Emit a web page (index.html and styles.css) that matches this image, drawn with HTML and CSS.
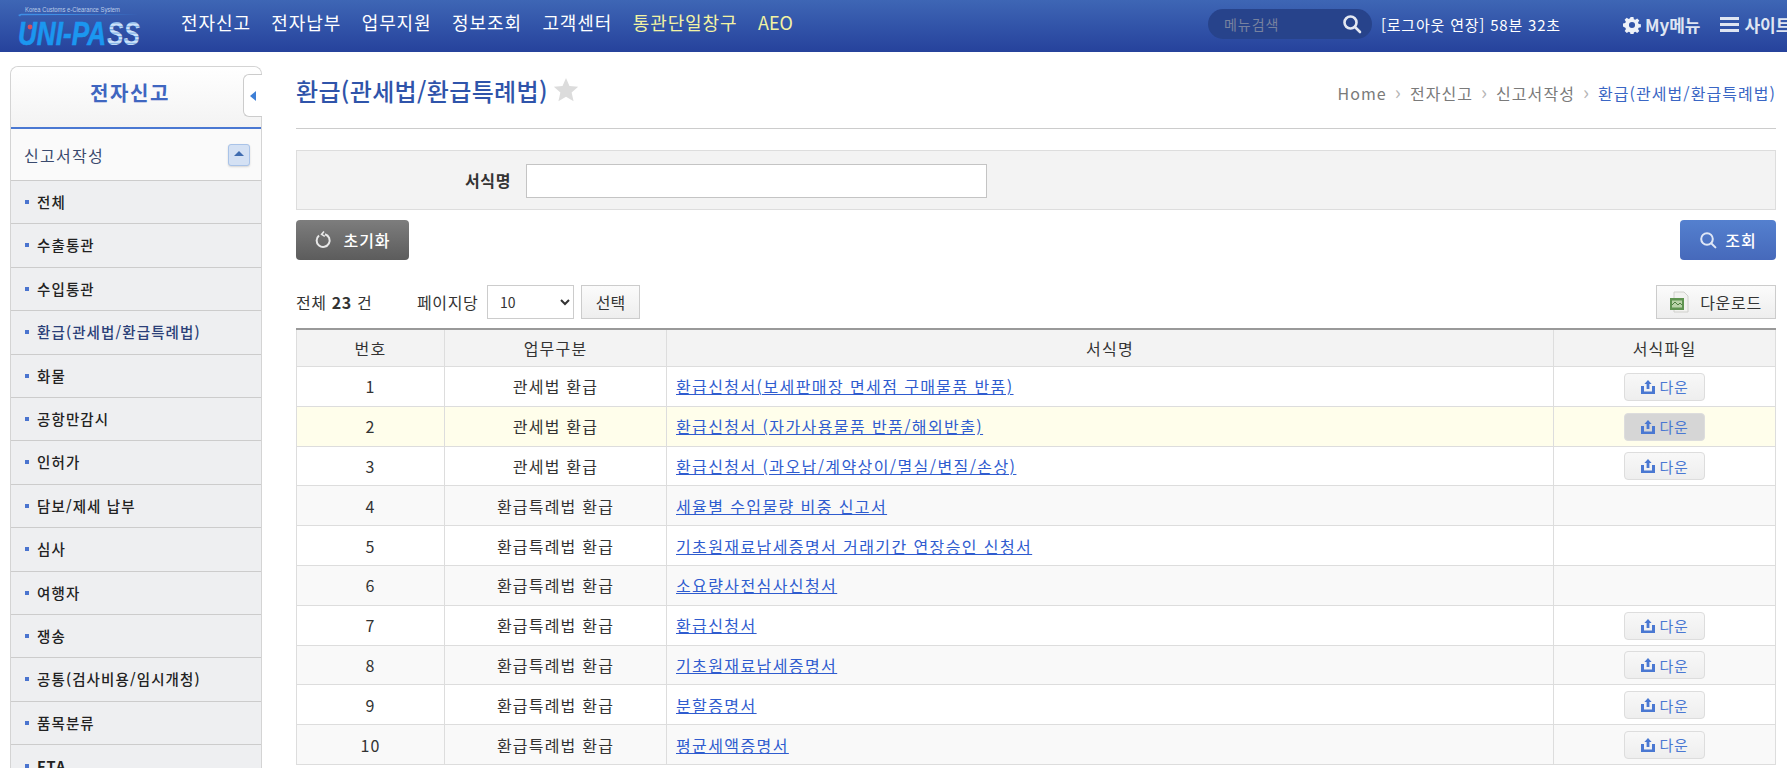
FILE: index.html
```html
<!DOCTYPE html>
<html lang="ko">
<head>
    <meta charset="UTF-8">
    <meta name="viewport" content="width=device-width, initial-scale=1.0">
    <title>환급(관세법/환급특례법) - UNI-PASS</title>
    <link rel="stylesheet" href="styles.css">
</head>
<body>
    <header class="top-bar">
        <a class="logo" href="#">
            <svg width="124" height="48" viewBox="0 0 124 48">
                <defs>
                    <pattern id="logoStripe" width="4" height="3.4" patternUnits="userSpaceOnUse">
                        <rect width="4" height="3.4" fill="#cfe4fa"></rect>
                        <rect width="4" height="1.1" fill="#6fa4e0"></rect>
                    </pattern>
                </defs>
                <text class="logo-small" x="8" y="10" textLength="95" lengthAdjust="spacingAndGlyphs">Korea Customs e-Clearance System</text>
                <path d="M1 13 L4 11.8 L122 12.4 L4 13.2 L3 14.6 Z" fill="#3f8fe6"></path>
                <text class="logo-big" x="1" y="43" textLength="88" lengthAdjust="spacingAndGlyphs" fill="#1b97f0" stroke="#1b97f0">UNI-PA</text>
                <text class="logo-big" x="90" y="43" textLength="33" lengthAdjust="spacingAndGlyphs" fill="url(#logoStripe)">SS</text>
                <circle cx="13" cy="25" r="2.4" fill="#d8505a"></circle>
            </svg>
        </a>
        <nav class="gnb">
            <a href="#">전자신고</a>
            <a href="#">전자납부</a>
            <a href="#">업무지원</a>
            <a href="#">정보조회</a>
            <a href="#">고객센터</a>
            <a class="gnb-hl" href="#">통관단일창구</a>
            <a class="gnb-hl gnb-latin" href="#">AEO</a>
        </nav>
        <div class="menu-search">
            <span>메뉴검색</span>
            <svg width="20" height="20" viewBox="0 0 20 20" fill="none" stroke="#e4e8f2" stroke-width="2.6">
                <circle cx="8.5" cy="8.5" r="6"></circle>
                <path d="M13 13 L18 18" stroke-linecap="round"></path>
            </svg>
        </div>
        <div class="session">[로그아웃 연장] 58분 32초</div>
        <a class="top-link my-menu" href="#">
            <svg width="18" height="18" viewBox="-1 -1 20 20">
                <path fill="#eef1f8" fill-rule="evenodd" d="M7.4 0h3.2l.5 2.5 1.5.7 2.2-1.4 2.3 2.3-1.4 2.2.7 1.5 2.5.5v3.2l-2.5.5-.7 1.5 1.4 2.2-2.3 2.3-2.2-1.4-1.5.7-.5 2.5H7.4l-.5-2.5-1.5-.7-2.2 1.4-2.3-2.3 1.4-2.2-.7-1.5L-1 10.6V7.4l2.5-.5.7-1.5-1.4-2.2 2.3-2.3 2.2 1.4 1.5-.7zM9 5.6a3.4 3.4 0 1 0 0 6.8 3.4 3.4 0 0 0 0-6.8z"></path>
            </svg>
            My메뉴
        </a>
        <a class="top-link site-map" href="#">
            <span class="burger"></span>
            사이트맵
        </a>
    </header>

    <div class="wrap">
        <aside class="side">
            <div class="side-title">
                <h2>전자신고</h2>
                <button class="side-toggle" type="button"><span></span></button>
            </div>
            <div class="side-group">
                <span>신고서작성</span>
                <button class="group-toggle" type="button"><span></span></button>
            </div>
            <ul class="side-list">
                <li><a href="#">전체</a></li>
                <li><a href="#">수출통관</a></li>
                <li><a href="#">수입통관</a></li>
                <li class="on"><a href="#">환급(관세법/환급특례법)</a></li>
                <li><a href="#">화물</a></li>
                <li><a href="#">공항만감시</a></li>
                <li><a href="#">인허가</a></li>
                <li><a href="#">담보/제세 납부</a></li>
                <li><a href="#">심사</a></li>
                <li><a href="#">여행자</a></li>
                <li><a href="#">쟁송</a></li>
                <li><a href="#">공통(검사비용/임시개청)</a></li>
                <li><a href="#">품목분류</a></li>
                <li><a class="fta" href="#">FTA</a></li>
            </ul>
        </aside>

        <main class="content">
            <div class="page-head">
                <div class="page-title">
                    <h1>환급(관세법/환급특례법)</h1>
                    <svg width="26" height="26" viewBox="0 0 24 24"><path fill="#dcdcdc" d="M12 1l3.2 7.4 8 .7-6 5.3 1.8 7.9L12 18.2l-7 4.1 1.8-7.9-6-5.3 8-.7z"></path></svg>
                </div>
                <ol class="crumbs">
                    <li>Home</li>
                    <li>전자신고</li>
                    <li>신고서작성</li>
                    <li class="crumb-now">환급(관세법/환급특례법)</li>
                </ol>
            </div>

            <div class="search-box">
                <label for="formName">서식명</label>
                <input id="formName" type="text">
            </div>

            <div class="btn-row">
                <button class="btn btn-reset" type="button">
                    <svg width="18" height="18" viewBox="0 0 18 18" fill="none" stroke="#e8e8e8" stroke-width="2">
                        <path d="M5 4.4 A6.5 6.5 0 1 0 11 3.2"></path>
                        <path d="M10 0.6 L7.6 3.4 L10.8 5.4" stroke-width="1.6"></path>
                    </svg>
                    초기화
                </button>
                <button class="btn btn-search" type="button">
                    <svg width="18" height="18" viewBox="0 0 18 18" fill="none" stroke="#dfe7f6" stroke-width="2">
                        <circle cx="8" cy="8" r="5.8"></circle>
                        <path d="M12.2 12.2 L16.4 16.4" stroke-linecap="round"></path>
                    </svg>
                    조회
                </button>
            </div>

            <div class="list-bar">
                <span class="total">전체 <b>23</b> 건</span>
                <label class="per-page" for="perPage">페이지당</label>
                <select class="per-select" id="perPage">
                    <option>10</option>
                    <option>20</option>
                    <option>50</option>
                </select>
                <button class="btn-plain" type="button">선택</button>
                <button class="btn-plain btn-excel" type="button">
                    <svg width="20" height="22" viewBox="0 0 20 22">
                        <path d="M4 1h10l4 4v16H4z" fill="#f2f2f0" stroke="#d0d0cc"></path>
                        <rect x="0" y="7" width="14" height="12" fill="#5f9450"></rect>
                        <rect x="2" y="9.5" width="10" height="7" fill="#b9d3a8"></rect>
                        <path d="M2 14 L5 11 L8 14 L10 12 L12 14" stroke="#4f7f40" fill="none"></path>
                    </svg>
                    다운로드
                </button>
            </div>

            <table class="grid">
                <colgroup>
                    <col class="col-no">
                    <col class="col-type">
                    <col class="col-name">
                    <col class="col-file">
                </colgroup>
                <thead>
                    <tr>
                        <th>번호</th>
                        <th>업무구분</th>
                        <th>서식명</th>
                        <th>서식파일</th>
                    </tr>
                </thead>
                <tbody>
                    <tr>
                        <td>1</td>
                        <td>관세법 환급</td>
                        <td class="left"><a href="#">환급신청서(보세판매장 면세점 구매물품 반품)</a></td>
                        <td><button class="btn-down" type="button"><svg class="up-icon" viewBox="0 0 14 14"><path d="M7 0l3.6 4H8.4v5H5.6V4H3.4zM0 6h3v5.6h8V6h3v8H0z"></path></svg>다운</button></td>
                    </tr>
                    <tr class="hover-row">
                        <td>2</td>
                        <td>관세법 환급</td>
                        <td class="left"><a href="#">환급신청서 (자가사용물품 반품/해외반출)</a></td>
                        <td><button class="btn-down" type="button"><svg class="up-icon" viewBox="0 0 14 14"><path d="M7 0l3.6 4H8.4v5H5.6V4H3.4zM0 6h3v5.6h8V6h3v8H0z"></path></svg>다운</button></td>
                    </tr>
                    <tr>
                        <td>3</td>
                        <td>관세법 환급</td>
                        <td class="left"><a href="#">환급신청서 (과오납/계약상이/멸실/변질/손상)</a></td>
                        <td><button class="btn-down" type="button"><svg class="up-icon" viewBox="0 0 14 14"><path d="M7 0l3.6 4H8.4v5H5.6V4H3.4zM0 6h3v5.6h8V6h3v8H0z"></path></svg>다운</button></td>
                    </tr>
                    <tr>
                        <td>4</td>
                        <td>환급특례법 환급</td>
                        <td class="left"><a href="#">세율별 수입물량 비중 신고서</a></td>
                        <td></td>
                    </tr>
                    <tr>
                        <td>5</td>
                        <td>환급특례법 환급</td>
                        <td class="left"><a href="#">기초원재료납세증명서 거래기간 연장승인 신청서</a></td>
                        <td></td>
                    </tr>
                    <tr>
                        <td>6</td>
                        <td>환급특례법 환급</td>
                        <td class="left"><a href="#">소요량사전심사신청서</a></td>
                        <td></td>
                    </tr>
                    <tr>
                        <td>7</td>
                        <td>환급특례법 환급</td>
                        <td class="left"><a href="#">환급신청서</a></td>
                        <td><button class="btn-down" type="button"><svg class="up-icon" viewBox="0 0 14 14"><path d="M7 0l3.6 4H8.4v5H5.6V4H3.4zM0 6h3v5.6h8V6h3v8H0z"></path></svg>다운</button></td>
                    </tr>
                    <tr>
                        <td>8</td>
                        <td>환급특례법 환급</td>
                        <td class="left"><a href="#">기초원재료납세증명서</a></td>
                        <td><button class="btn-down" type="button"><svg class="up-icon" viewBox="0 0 14 14"><path d="M7 0l3.6 4H8.4v5H5.6V4H3.4zM0 6h3v5.6h8V6h3v8H0z"></path></svg>다운</button></td>
                    </tr>
                    <tr>
                        <td>9</td>
                        <td>환급특례법 환급</td>
                        <td class="left"><a href="#">분할증명서</a></td>
                        <td><button class="btn-down" type="button"><svg class="up-icon" viewBox="0 0 14 14"><path d="M7 0l3.6 4H8.4v5H5.6V4H3.4zM0 6h3v5.6h8V6h3v8H0z"></path></svg>다운</button></td>
                    </tr>
                    <tr>
                        <td>10</td>
                        <td>환급특례법 환급</td>
                        <td class="left"><a href="#">평균세액증명서</a></td>
                        <td><button class="btn-down" type="button"><svg class="up-icon" viewBox="0 0 14 14"><path d="M7 0l3.6 4H8.4v5H5.6V4H3.4zM0 6h3v5.6h8V6h3v8H0z"></path></svg>다운</button></td>
                    </tr>
                </tbody>
            </table>
        </main>
    </div>
</body>
</html>
```

FILE: styles.css
```css
* {
    box-sizing: border-box;
}
html, body {
    height: 100%;
}
body {
    margin: 0;
    overflow: hidden;
    font-family: "Noto Sans CJK KR", "Noto Sans", sans-serif;
    font-size: 15px;
    color: #333;
    background: #fff;
}
a {
    text-decoration: none;
    color: inherit;
}
button {
    font-family: inherit;
    cursor: pointer;
}

/* top bar */
.top-bar {
    display: flex;
    align-items: center;
    height: 52px;
    padding-left: 17px;
    overflow: hidden;
    white-space: nowrap;
    color: #fff;
    background: linear-gradient(#3e66b5, #26429c);
}
.logo {
    display: block;
    width: 124px;
    height: 48px;
    flex: none;
}
.logo-small {
    font-family: "Liberation Sans", sans-serif;
    font-size: 6.5px;
    fill: #b9cbe8;
}
.logo-big {
    font-family: "Liberation Sans", sans-serif;
    font-size: 33px;
    font-weight: bold;
    font-style: italic;
    stroke-width: 0.6px;
}
.gnb {
    display: flex;
    gap: 20.5px;
    margin-left: 40px;
    margin-top: -8px;
    font-size: 18px;
    letter-spacing: 0.9px;
    flex: none;
}
.gnb-hl {
    color: #f3f3a2;
}
.gnb-latin {
    letter-spacing: 0;
}
.menu-search {
    display: flex;
    align-items: center;
    justify-content: space-between;
    width: 164px;
    height: 30px;
    margin-top: -4px;
    margin-left: 415px;
    padding: 0 10px 0 16px;
    border-radius: 15px;
    background: #27438b;
    color: #77829f;
    font-size: 14px;
    letter-spacing: 1px;
    flex: none;
}
.session {
    margin-left: 9px;
    margin-top: -3px;
    font-size: 15px;
    letter-spacing: 0.8px;
    flex: none;
}
.top-link {
    display: flex;
    align-items: center;
    gap: 4px;
    margin-top: -3px;
    font-size: 17px;
    font-weight: 700;
    color: #dfe5f2;
    flex: none;
}
.my-menu {
    margin-left: 62px;
}
.site-map {
    margin-left: 20px;
    gap: 5px;
}
.burger {
    display: block;
    width: 19px;
    height: 15px;
    border-top: 3px solid #dfe5f2;
    border-bottom: 3px solid #dfe5f2;
    position: relative;
}
.burger::after {
    content: "";
    position: absolute;
    left: 0;
    right: 0;
    top: 3px;
    height: 3px;
    background: #dfe5f2;
}

/* layout */
.wrap {
    display: flex;
    align-items: flex-start;
    padding-left: 10px;
}

/* left menu */
.side {
    width: 252px;
    margin-top: 14px;
    border: 1px solid #d4d4d4;
    border-bottom: 0;
    border-radius: 8px 8px 0 0;
    flex: none;
}
.side-title {
    position: relative;
    height: 62px;
    border-bottom: 2px solid #4a78d2;
    border-radius: 8px 8px 0 0;
    background: linear-gradient(#fff, #f3f3f3);
    text-align: center;
}
.side-title h2 {
    margin: 0;
    padding-right: 12px;
    font-size: 20px;
    font-weight: 700;
    line-height: 52px;
    letter-spacing: 1.6px;
    color: #3f66c0;
}
.side-toggle {
    position: absolute;
    top: 7px;
    right: -1px;
    width: 19px;
    height: 43px;
    padding: 0;
    border: 1px solid #ccc;
    border-right: 0;
    border-radius: 6px 0 0 6px;
    background: #fff;
}
.side-toggle span {
    display: block;
    width: 0;
    margin-left: 6px;
    border: 5px solid transparent;
    border-left: 0;
    border-right: 6px solid #3d7fd6;
}
.side-group {
    display: flex;
    align-items: center;
    justify-content: space-between;
    height: 52px;
    padding: 0 11px 0 13px;
    border-bottom: 1px solid #ccc;
    background: #fafafa;
    font-size: 16px;
    letter-spacing: 1.3px;
    color: #3a4a6e;
}
.group-toggle {
    width: 22px;
    height: 22px;
    padding: 0;
    border: 1px solid #a9c3e8;
    border-radius: 3px;
    background: #d4e1f4;
    box-shadow: 0 1px 2px rgba(0, 0, 0, 0.15);
}
.group-toggle span {
    display: block;
    width: 0;
    margin: 0 auto 2px;
    border: 5px solid transparent;
    border-top: 0;
    border-bottom: 5px solid #3f6cb0;
}
.side-list {
    margin: 0;
    padding: 0;
    list-style: none;
}
.side-list li {
    height: 43.4px;
    border-bottom: 1px solid #ccc;
    background: #eeeff1;
}
.side-list a {
    display: block;
    position: relative;
    padding-left: 26px;
    line-height: 41px;
    font-size: 14.5px;
    font-weight: 500;
    letter-spacing: 1.1px;
    color: #222;
}
.side-list a::before {
    content: "";
    position: absolute;
    left: 14px;
    top: 19px;
    width: 4px;
    height: 4px;
    background: #4a74cf;
}
.side-list .on a {
    color: #2b3f78;
}
.side-list .fta {
    font-weight: 700;
}

/* content */
.content {
    width: 1480px;
    margin-left: 34px;
    flex: none;
}
.page-head {
    display: flex;
    align-items: center;
    justify-content: space-between;
    height: 77px;
    border-bottom: 1px solid #ccc;
}
.page-title {
    display: flex;
    align-items: center;
    gap: 5px;
}
.page-title h1 {
    margin: 0;
    font-size: 24px;
    font-weight: 500;
    letter-spacing: 0.35px;
    color: #2f54aa;
}
.crumbs {
    display: flex;
    align-items: center;
    margin: 6px 0 0;
    padding: 0;
    list-style: none;
    font-size: 16px;
    font-weight: 400;
    letter-spacing: 1.05px;
    color: #7a7a7a;
}
.crumbs li + li::before {
    content: "\203A";
    margin: 0 8px;
    font-size: 20px;
    line-height: 1;
    color: #b5b5b5;
}
.crumbs .crumb-now {
    color: #3a66c4;
}
.search-box {
    display: flex;
    align-items: center;
    height: 60px;
    margin-top: 21px;
    border: 1px solid #ddd;
    background: #f3f3f3;
}
.search-box label {
    width: 214px;
    margin-right: 15px;
    text-align: right;
    font-size: 16px;
    font-weight: 700;
    letter-spacing: 0.6px;
}
.search-box input {
    width: 461px;
    height: 34px;
    margin-top: 1px;
    border: 1px solid #c4c4c4;
    background: #fff;
}
.btn-row {
    display: flex;
    justify-content: space-between;
    margin-top: 10px;
}
.btn {
    display: flex;
    align-items: center;
    justify-content: center;
    gap: 11px;
    height: 40px;
    border: 0;
    border-radius: 4px;
    color: #fff;
    font-size: 16px;
    font-weight: 500;
    letter-spacing: 1px;
}
.btn-reset {
    width: 113px;
    background: linear-gradient(#7d7d7d, #5c5c5c);
}
.btn-search {
    width: 96px;
    gap: 8px;
    background: linear-gradient(#5480cf, #4669bb);
}
.list-bar {
    display: flex;
    align-items: center;
    height: 34px;
    margin-top: 25px;
    font-size: 16px;
    letter-spacing: 0.6px;
}
.total {
    width: 121px;
}
.total b {
    font-weight: 700;
}
.per-page {
    width: 70px;
}
.per-select {
    width: 87px;
    height: 34px;
    padding-left: 8px;
    border: 1px solid #ccc;
    background: #fff;
    font-family: inherit;
    font-size: 14px;
    color: #333;
}
.btn-plain {
    width: 59px;
    height: 34px;
    margin-left: 7px;
    padding: 0;
    border: 1px solid #ccc;
    background: linear-gradient(#fbfbfb, #eee);
    font-size: 16px;
    color: #333;
}
.btn-excel {
    display: flex;
    align-items: center;
    justify-content: center;
    gap: 10px;
    width: 120px;
    margin-left: auto;
    letter-spacing: 0.7px;
}

/* table */
.grid {
    width: 1480px;
    margin-top: 9px;
    border-collapse: collapse;
    table-layout: fixed;
    border-top: 2px solid #999;
    font-size: 16px;
    letter-spacing: 1.2px;
}
.col-no {
    width: 148px;
}
.col-type {
    width: 222px;
}
.col-file {
    width: 222px;
}
.grid th, .grid td {
    border: 1px solid #ddd;
    padding: 0;
    text-align: center;
}
.grid th {
    height: 37.5px;
    font-weight: 400;
    background: #f3f3f3;
}
.grid td {
    height: 39.8px;
}
.grid tbody tr:nth-child(even) {
    background: #f9f9f9;
}
.grid tbody .hover-row:nth-child(even) {
    background: #fffeeb;
}
.grid .left {
    padding-left: 9px;
    text-align: left;
}
.grid a {
    color: #2f5ccf;
    text-decoration: underline;
    letter-spacing: 1.4px;
}
.btn-down {
    display: inline-flex;
    align-items: center;
    justify-content: center;
    gap: 5px;
    width: 81px;
    height: 28px;
    padding: 0;
    border: 1px solid #ddd;
    border-radius: 4px;
    background: linear-gradient(#f8f8f8, #eee);
    color: #4a78d2;
    font-size: 15px;
    letter-spacing: 0.6px;
    vertical-align: middle;
}
.hover-row .btn-down {
    background: #d6d6d6;
}
.up-icon {
    width: 14px;
    height: 14px;
    fill: #4a78d2;
}
```
